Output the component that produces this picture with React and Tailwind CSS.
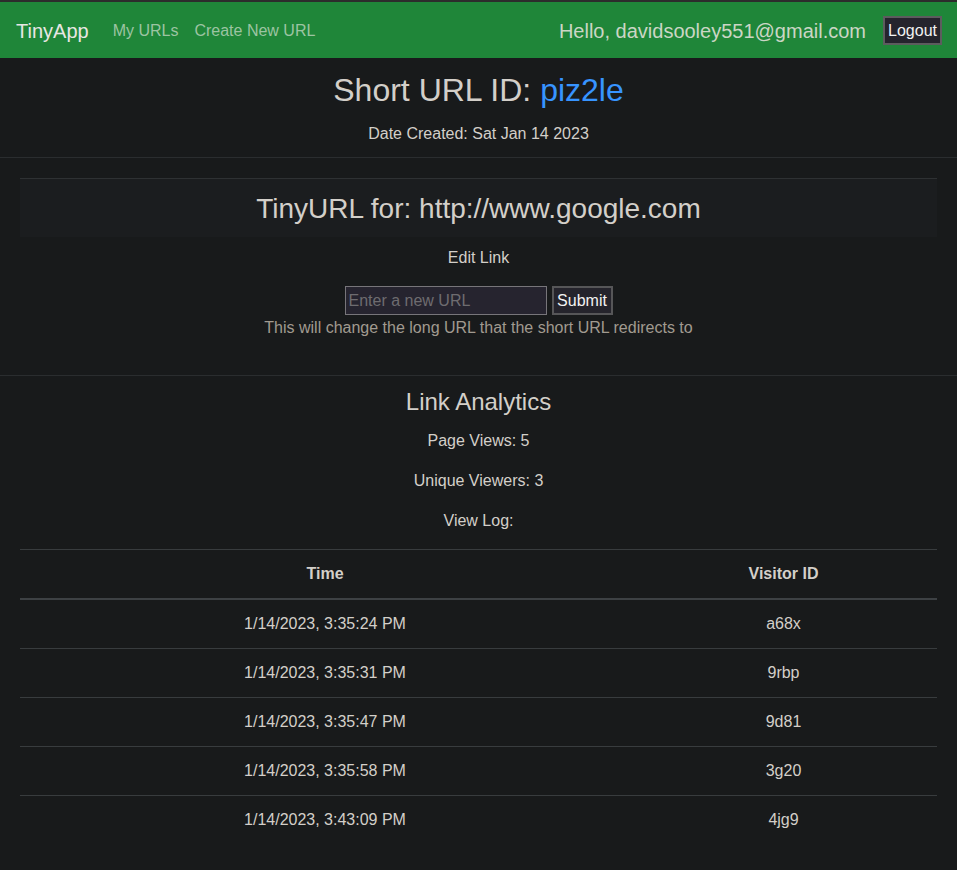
import React from 'react';

const visits = [
    { time: '1/14/2023, 3:35:24 PM', id: 'a68x' },
    { time: '1/14/2023, 3:35:31 PM', id: '9rbp' },
    { time: '1/14/2023, 3:35:47 PM', id: '9d81' },
    { time: '1/14/2023, 3:35:58 PM', id: '3g20' },
    { time: '1/14/2023, 3:43:09 PM', id: '4jg9' },
];

const Navbar = () => (
    <nav className="border-t-2 border-[#2c2c2c] bg-[#1f8639] h-[58px] flex items-center pl-4 pr-[15px] pt-px">
        <span className="text-[20px] text-[#e8e6e3] mr-4">TinyApp</span>
        <a className="px-2 text-[16px] text-[#9cc4a2]">My URLs</a>
        <a className="px-2 text-[16px] text-[#9cc4a2]">Create New URL</a>
        <div className="ml-auto flex items-center">
            <span className="text-[20px] text-[#cbd6c5] mr-[17px]">Hello, davidsooley551@gmail.com</span>
            <button className="w-[59px] h-[29px] bg-[#25242d] border-2 border-[#5c5c5e] text-[16px] text-[#f2f2f2] leading-none">
                Logout
            </button>
        </div>
    </nav>
);

export default function App() {
    return (
        <div
            className="min-h-[870px] bg-[#181a1b] text-[#d3cfc9] text-[16px] leading-6"
            style={{ fontFamily: '"Liberation Sans", Arial, sans-serif' }}
        >
            <Navbar />

            <div className="text-center pt-[13px]">
                <h2 className="text-[32px] leading-[38px]">
                    Short URL ID: <span className="text-[#3794ff]">piz2le</span>
                </h2>
                <p className="mt-[13px]">Date Created: Sat Jan 14 2023</p>
            </div>

            <hr className="mt-[11px] border-t border-[#2a2d2f]" />

            <div className="px-5 pt-5">
                <div className="border-t border-[#2e3133] bg-[#1b1d1f] h-[59px] flex items-center justify-center">
                    <h3 className="text-[28px] leading-[34px] mt-[2px]">TinyURL for: http://www.google.com</h3>
                </div>
            </div>

            <div className="text-center">
                <p className="mt-[9px]">Edit Link</p>
                <div className="mt-[16px] flex justify-center items-center gap-[5px]">
                    <input
                        placeholder="Enter a new URL"
                        className="w-[202px] h-[29px] px-[3px] bg-[#26242f] border border-[#77757a] text-[16px] text-[#d3cfc9] placeholder-[#6e6c70] outline-none"
                    />
                    <button className="w-[61px] h-[29px] bg-[#25242c] border-2 border-[#565658] text-[16px] text-[#f2f2f2] leading-none">
                        Submit
                    </button>
                </div>
                <p className="mt-px text-[#a19a90]">This will change the long URL that the short URL redirects to</p>
            </div>

            <hr className="mt-[35px] border-t border-[#2a2d2f]" />

            <div className="text-center">
                <h4 className="mt-[11px] text-[24px] leading-[29px]">Link Analytics</h4>
                <p className="mt-[13px]">Page Views: 5</p>
                <p className="mt-[16px]">Unique Viewers: 3</p>
                <p className="mt-[16px]">View Log:</p>
            </div>

            <div className="px-5 mt-[16px]">
                <table className="w-full border-separate border-spacing-0 text-center">
                    <thead>
                        <tr>
                            <th className="w-[610px] py-3 font-bold border-t border-b-2 border-t-[#383c3e] border-b-[#3d4144]">Time</th>
                            <th className="py-3 font-bold border-t border-b-2 border-t-[#383c3e] border-b-[#3d4144]">Visitor ID</th>
                        </tr>
                    </thead>
                    <tbody>
                        {visits.map((v, i) => (
                            <tr key={i}>
                                <td className={i > 0 ? 'py-3 border-t border-[#383c3e]' : 'py-3'}>{v.time}</td>
                                <td className={i > 0 ? 'py-3 border-t border-[#383c3e]' : 'py-3'}>{v.id}</td>
                            </tr>
                        ))}
                    </tbody>
                </table>
            </div>
        </div>
    );
}
